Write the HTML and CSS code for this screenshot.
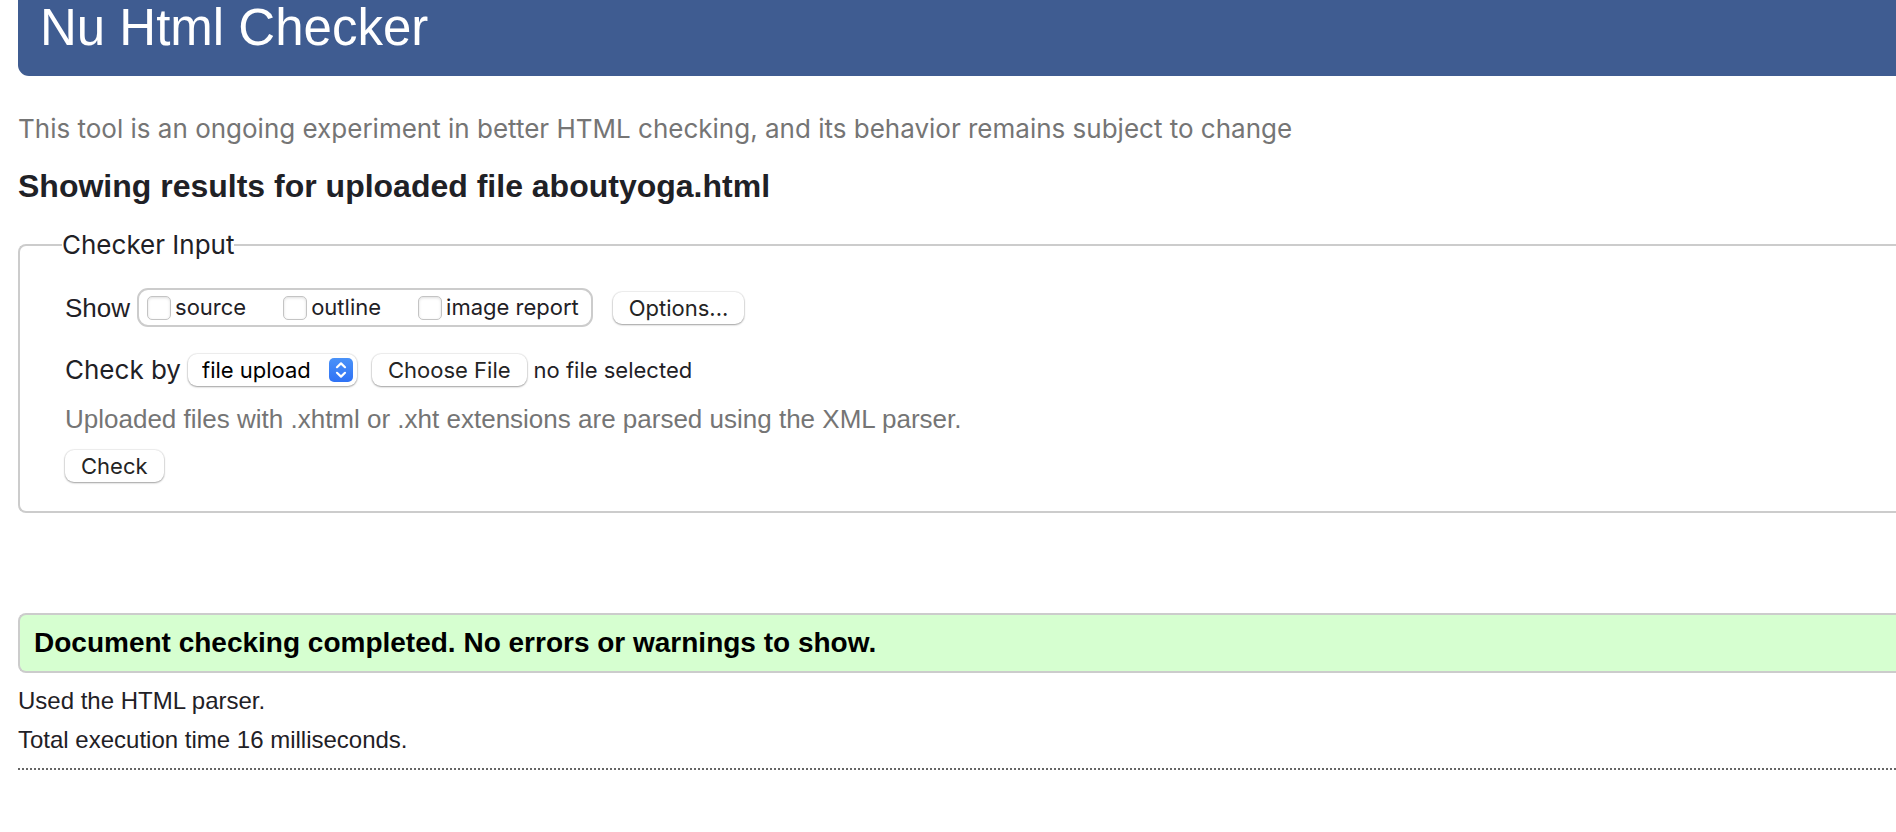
FILE: index.html
```html
<!DOCTYPE html>
<html lang="en">
<head>
<meta charset="utf-8">
<title>Nu Html Checker</title>
<link rel="stylesheet" href="styles.css">
</head>
<body>
<header class="banner"><h1 class="banner-title">Nu Html Checker</h1></header>
<main>
  <p class="tagline">This tool is an ongoing experiment in better HTML checking, and its behavior remains subject to change</p>
  <h2 class="results-title">Showing results for uploaded file aboutyoga.html</h2>
  <form>
    <fieldset class="checker">
      <legend class="legend">Checker Input</legend>
      <div class="row">
        <span class="row-label">Show</span>
        <div class="show-group">
          <label class="option"><input class="tick" type="checkbox" name="source">source</label>
          <label class="option"><input class="tick" type="checkbox" name="outline">outline</label>
          <label class="option"><input class="tick" type="checkbox" name="images">image report</label>
        </div>
        <button class="button options-button" type="button">Options...</button>
      </div>
      <div class="row row-input">
        <label class="row-label system" for="method">Check by</label>
        <div class="select-wrap">
          <select class="select" id="method"><option>file upload</option></select>
          <svg class="select-icon" viewBox="0 0 24 24" aria-hidden="true">
            <defs><linearGradient id="blue" x1="0" y1="0" x2="0" y2="1"><stop offset="0" stop-color="#4a92f8"/><stop offset="1" stop-color="#2f72f5"/></linearGradient></defs>
            <rect width="24" height="24" rx="5" fill="url(#blue)"/>
            <path d="M8 9.2 12 5.4l4 3.8M8 14.8l4 3.8 4-3.8" fill="none" stroke="#fff" stroke-width="2.2" stroke-linecap="round" stroke-linejoin="round"/>
          </svg>
        </div>
        <div class="file">
          <input class="file-input" type="file" id="file">
          <label class="button" for="file">Choose File</label>
          <span class="file-name">no file selected</span>
        </div>
      </div>
      <p class="hint">Uploaded files with .xhtml or .xht extensions are parsed using the XML parser.</p>
      <button class="button" type="submit">Check</button>
    </fieldset>
  </form>
  <p class="success">Document checking completed. No errors or warnings to show.</p>
  <div class="details">
    <p class="detail">Used the HTML parser.</p>
    <p class="detail">Total execution time 16 milliseconds.</p>
  </div>
</main>
</body>
</html>
```
FILE: styles.css
```css
* { box-sizing: border-box; }
body {
  margin: 0 0 0 18px;
  background: #fff;
  color: #1f2126;
  font-family: "Liberation Sans", Arial, sans-serif;
  font-size: 26px;
  line-height: 32px;
}
h1, h2, p { margin: 0; }
.banner {
  padding: 0 22px 20px;
  background: #3f5c91;
  border-bottom-left-radius: 11px;
}
.banner-title { color: #fff; font-size: 51px; font-weight: 400; line-height: 56px; }
.tagline, .legend, .system, .option, .button, .select, .file-name { font-family: Inter, sans-serif; }
.tagline { margin-top: 37px; color: #757575; }
.results-title { margin-top: 21px; font-size: 32px; line-height: 40px; }
.checker {
  margin: 23px 0 0;
  padding: 27px 45px 29px;
  border: 2px solid #ccc;
  border-right: 0;
  border-radius: 8px 0 0 8px;
}
.legend { margin-left: -3px; padding: 0; }
.row { display: flex; align-items: center; }
.row-input { margin-top: 27px; }
.row-label { margin-right: 7px; }
.show-group {
  display: flex;
  gap: 37px;
  padding: 3px 12px 3px 8px;
  border: 2px solid #ccc;
  border-radius: 11px;
}
.option { display: flex; align-items: center; gap: 4px; font-size: 22px; line-height: 29px; }
.tick {
  appearance: none;
  width: 24px;
  height: 24px;
  margin: 0;
  border: 1px solid #c4c4c4;
  border-radius: 5px;
  background: #fff;
  box-shadow: inset 0 1px 3px #0002;
}
.tick:checked { background: #3478f6; }
.button {
  padding: 0 16px;
  border: 0;
  border-radius: 9px;
  background: #fff;
  box-shadow: 0 0 1px 1px #0001, 0 1px 2px #0005;
  color: #242424;
  font-size: 22px;
  line-height: 32px;
}
.options-button { margin-left: 20px; }
.select-wrap { display: grid; align-items: center; margin-right: 15px; }
.select {
  grid-area: 1 / 1;
  appearance: none;
  height: 32px;
  padding: 0 46px 0 14px;
  border: 0;
  border-radius: 9px;
  background: #fff;
  box-shadow: 0 0 1px 1px #0001, 0 1px 2px #0005;
  color: #000;
  font-size: 22px;
}
.select-icon {
  grid-area: 1 / 1;
  justify-self: end;
  width: 24px;
  height: 24px;
  margin-right: 4px;
  pointer-events: none;
}
.file { display: flex; gap: 7px; align-items: center; }
.file-input { position: absolute; width: 1px; height: 1px; opacity: 0; }
.file-name { font-size: 22px; }
.hint { margin: 17px 0 14px; color: #757575; }
.success {
  margin-top: 100px;
  padding: 12px 14px;
  border: 2px solid #ccc;
  border-right: 0;
  border-radius: 8px 0 0 8px;
  background: #d6ffd0;
  color: #000;
  font-size: 28px;
  font-weight: 700;
}
.details {
  padding: 12px 0;
  border-bottom: 2px dotted #666;
  font-size: 24px;
}
.detail + .detail { margin-top: 7px; }
```
